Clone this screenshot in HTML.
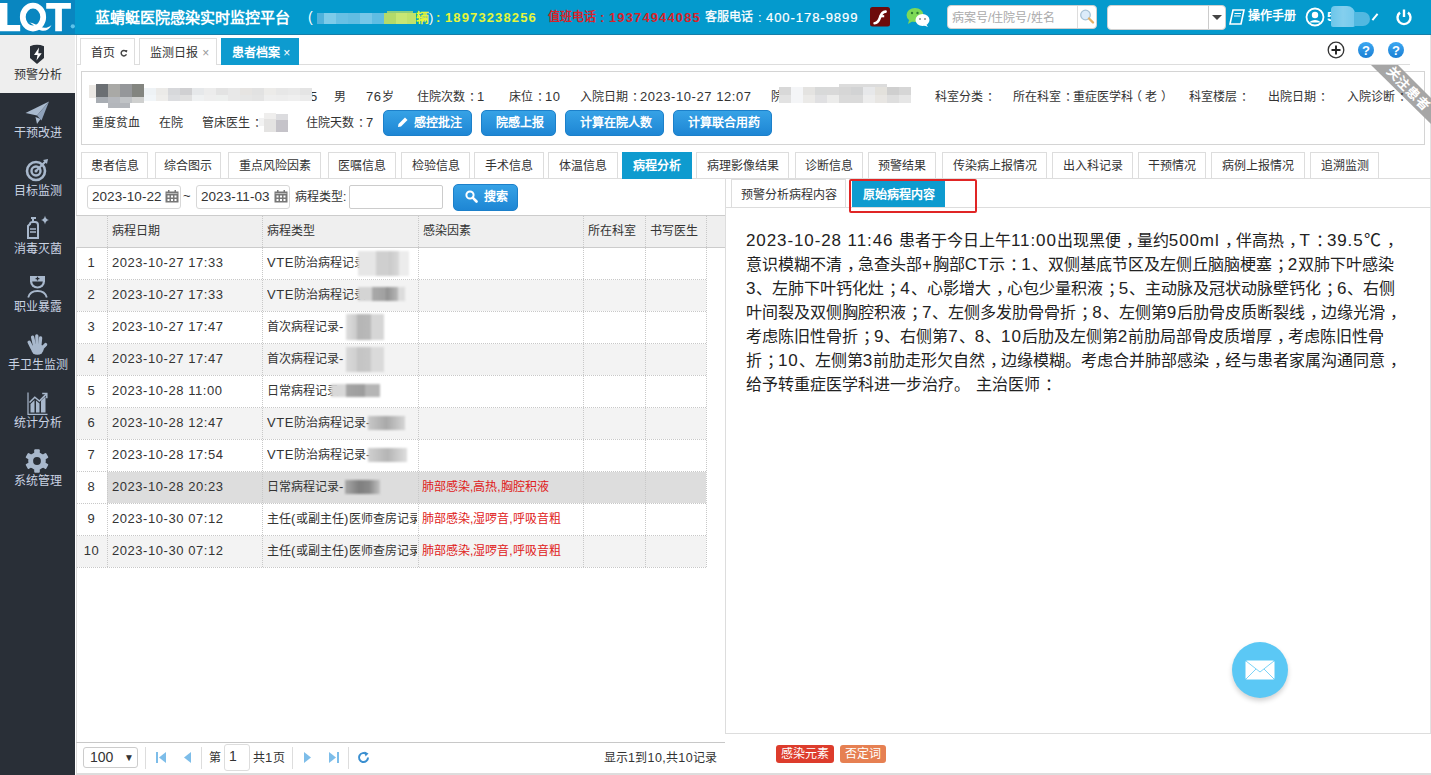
<!DOCTYPE html>
<html lang="zh-CN">
<head>
<meta charset="utf-8">
<style>
*{box-sizing:border-box;margin:0;padding:0}
html,body{width:1431px;height:775px;overflow:hidden;background:#fff;font-family:"Liberation Sans",sans-serif;color:#333;font-size:12px}
.a{position:absolute;white-space:nowrap}
#hdr{position:absolute;left:0;top:0;width:1431px;height:35px;background:#049acd;border-bottom:1px solid #167ea8}
#logo{position:absolute;left:0;top:0;width:75px;height:34px;background:#0986c0;overflow:hidden}
#side{position:absolute;left:0;top:35px;width:75px;height:740px;background:#292f37}
.si{position:absolute;left:0;width:75px;height:58px;text-align:center;color:#c9d3e3;font-size:12px}
.si .t{position:absolute;left:0;width:75px;top:32px;line-height:16px;text-align:center}
.si svg{position:absolute;left:27px;top:6px}
.tab{position:absolute;top:38px;height:27px;border:1px solid #ddd;border-bottom:none;background:#fff;font-size:12px;line-height:28px;color:#333}
.stab{position:absolute;top:152px;height:27px;border:1px solid #ddd;background:#fff;font-size:12px;line-height:27px;color:#333;text-align:center}
.btn{position:absolute;top:110px;height:26px;border-radius:5px;background:linear-gradient(#36a2e6,#1e86d4);color:#fff;font-size:12px;font-weight:bold;line-height:25px;text-align:center;border:1px solid #1c80ca;padding-left:2px}
.cell{position:absolute;height:32px;line-height:32px;font-size:12px;color:#333;white-space:nowrap}
.v12r{font-size:12px}
.v12s{font-size:12.5px;letter-spacing:0.5px}
.ln{position:absolute;left:746px;font-size:16px;color:#222;white-space:nowrap;height:24px;line-height:24px}
.n{letter-spacing:1.4px}
.v16{font-size:17px;letter-spacing:0.9px}
.v12{font-size:13px;letter-spacing:0.55px}
.fp{font-style:normal;position:relative;left:0.32em}
.fpl{font-style:normal;position:relative;left:-0.25em}
.fpr{font-style:normal;position:relative;left:0.3em}
</style>
</head>
<body>
<!-- HEADER -->
<div id="hdr"></div>
<div id="logo"><svg width="75" height="34" viewBox="0 0 75 34" style="position:absolute;left:0;top:0"><path d="M0 3 H7.4 V25 H20.2 V31.3 H0 Z" fill="#fff"/><ellipse cx="33" cy="17.1" rx="10.2" ry="11.4" fill="none" stroke="#fff" stroke-width="5.8"/><path d="M29 22.5 C33 23.5 36 29 41 30.5 C45.5 31.8 49.5 29.5 51.5 25 C48.5 27.8 44.5 28.6 41 27 C37 25.3 33.5 22.6 29 22.5 Z" fill="#fff"/><path d="M46.2 2.9 H70.9 V8.8 H61.9 V31.3 H55.2 V8.8 H46.2 Z" fill="#fff"/><circle cx="72.8" cy="26.3" r="2.1" fill="#5ec3ea"/></svg></div>
<div class="a" style="left:95px;top:8px;font-size:15px;font-weight:bold;color:#fff;line-height:19px">蓝蜻蜓医院感染实时监控平台</div>

<div id="side"></div>

<!-- SIDEBAR ITEMS -->
<div class="si" style="top:35px;height:58px;background:#eeeeee;color:#333">
 <svg width="16" height="21" viewBox="0 0 16 21" style="left:29px;top:9px"><path d="M1 2.2 Q8 -0.6 15 2.2 V14 L8 20 L1 14 Z" fill="#292f37"/><path d="M10 3.5 L5 11 H8.5 L7.5 16.5 L12.7 9.3 H9.3 Z" fill="#fff"/></svg>
 <div class="t">预警分析</div></div>
<div class="si" style="top:93px">
 <svg width="26" height="24" viewBox="0 0 26 24" style="left:25px;top:8px"><path d="M0.5 12 L24 0.5 L12 14.5 Z" fill="#a9bace"/><path d="M12 14.5 L24 0.5 L16.5 19.5 Z" fill="#8fa2ba"/><path d="M10.5 16 L12 23 L15.5 18 Z" fill="#a9bace"/></svg>
 <div class="t">干预改进</div></div>
<div class="si" style="top:151px">
 <svg width="26" height="24" viewBox="0 0 26 24" style="left:25px;top:7px"><circle cx="11" cy="13" r="9" fill="none" stroke="#a8b8cc" stroke-width="2.6"/><circle cx="11" cy="13" r="4.5" fill="none" stroke="#a8b8cc" stroke-width="2.4"/><circle cx="11" cy="13" r="1.5" fill="#a8b8cc"/><path d="M11 13 L21 3" stroke="#a8b8cc" stroke-width="2.2"/><path d="M18 2 L23 1 L22 6 Z" fill="#a8b8cc"/></svg>
 <div class="t">目标监测</div></div>
<div class="si" style="top:209px">
 <svg width="26" height="26" viewBox="0 0 26 26" style="left:25px;top:5px"><path d="M6 4 H11 M8 4 V8" stroke="#a8b8cc" stroke-width="2" fill="none"/><path d="M5 10 C5 8 6 8 8 8 H10 C12 8 13 9 13 11 V24 H3 V12 Z" fill="none" stroke="#a8b8cc" stroke-width="2"/><path d="M5 15 H11 M5 18 H11" stroke="#a8b8cc" stroke-width="1.5"/><path d="M20 1.5 Q20.6 5.2 24 6 Q20.6 6.8 20 10.5 Q19.4 6.8 16 6 Q19.4 5.2 20 1.5 Z" fill="#a8b8cc"/></svg>
 <div class="t">消毒灭菌</div></div>
<div class="si" style="top:267px">
 <svg width="21" height="22" viewBox="0 0 21 22" style="left:27px;top:9px"><path d="M3 0 H18 V5.5 A7.5 7 0 0 1 3 5.5 Z" fill="#a8b8cc"/><path d="M5.2 5.6 H15.8 A5.3 4.8 0 0 1 5.2 5.6 Z" fill="#292f37"/><path d="M10.5 0.8 V4.6 M8.6 2.7 H12.4" stroke="#292f37" stroke-width="1.3"/><path d="M1.2 21.5 C2.5 16.5 6.5 15 10.5 15 C14.5 15 18.5 16.5 19.8 21.5" fill="none" stroke="#a8b8cc" stroke-width="1.8"/></svg>
 <div class="t">职业暴露</div></div>
<div class="si" style="top:325px">
 <svg width="21" height="22" viewBox="0 0 21 22" style="left:27px;top:9px"><g stroke="#a8b8cc" stroke-linecap="round" stroke-width="3.3" fill="none"><path d="M2.2 8.2 L5 14"/><path d="M5.6 3.2 L7.6 12"/><path d="M9.8 1.8 L10.2 12"/><path d="M13.6 3.8 L12.8 12"/><path d="M18.6 10.6 L14.2 15"/></g><ellipse cx="10.4" cy="15.2" rx="6.2" ry="5.6" fill="#a8b8cc"/></svg>
 <div class="t">手卫生监测</div></div>
<div class="si" style="top:383px">
 <svg width="22" height="24" viewBox="0 0 22 24" style="left:27px;top:9px"><path d="M1 0.5 V22.3 H20.5" fill="none" stroke="#a8b8cc" stroke-width="1.2"/><path d="M3.5 20.5 V12 L7.5 8.2 V20.5 Z M9 20.5 V8.6 L12.5 11.6 V20.5 Z M14 20.5 V8.8 L18.5 4.6 V20.5 Z" fill="#a8b8cc"/><path d="M2.5 10.5 L7.8 5.2 L12.4 9 L19 2.4" fill="none" stroke="#a8b8cc" stroke-width="1.5"/><path d="M15.2 1.6 H19.8 V6.2" fill="none" stroke="#a8b8cc" stroke-width="1.5"/></svg>
 <div class="t">统计分析</div></div>
<div class="si" style="top:441px">
 <svg width="24" height="24" viewBox="0 0 24 24" style="left:25px;top:8px"><g fill="#a8b8cc" transform="translate(12 12)"><rect x="-2.8" y="-11.8" width="5.6" height="23.6" rx="1"/><rect x="-2.8" y="-11.8" width="5.6" height="23.6" rx="1" transform="rotate(60)"/><rect x="-2.8" y="-11.8" width="5.6" height="23.6" rx="1" transform="rotate(120)"/><circle r="8.8"/></g><circle cx="12" cy="12" r="3.9" fill="#292f37"/></svg>
 <div class="t">系统管理</div></div>

<!-- TABS -->
<div style="position:absolute;left:76px;top:35px;width:1px;height:740px;background:#dcdcdc"></div>
<div style="position:absolute;left:76px;top:64px;width:1334px;height:1px;background:#ddd"></div>
<div class="tab" style="left:80px;width:55px;padding-left:10px">首页</div><svg class="a" style="left:120px;top:49px" width="8" height="8" viewBox="0 0 10 10"><path d="M7.6 3.2 A3.4 3.4 0 1 0 8 6.6" fill="none" stroke="#444" stroke-width="1.8"/><path d="M5.8 1.6 L9.2 1.2 L8.6 4.6 Z" fill="#444"/></svg>
<div class="tab" style="left:139px;width:78px;padding-left:10px">监测日报 <span style="color:#999;position:relative;left:1px">×</span></div>
<div class="tab" style="left:221px;width:78px;padding-left:10px;background:#0e9bcf;border-color:#0e9bcf;color:#fff;font-weight:bold">患者档案 <span style="font-weight:normal">×</span></div>

<!-- HEADER RIGHT -->
<div class="a" style="left:308px;top:9px;font-size:14px;color:#fff;line-height:17px">(</div>
<div class="a" style="left:317px;top:13px;width:67px;height:11px;background:linear-gradient(90deg,#4fb2dc 0,#4fb2dc 10%,#7dcbe9 10%,#7dcbe9 28%,#68c0e4 28%,#68c0e4 46%,#62bde2 46%,#62bde2 64%,#76c7e8 64%,#76c7e8 82%,#5fbde3 82%)"></div>
<div class="a" style="left:384px;top:13px;width:32px;height:11px;background:linear-gradient(90deg,#b4da6a 0,#b4da6a 36%,#c8e674 36%,#c8e674 72%,#c0e26c 72%)"></div>
<div class="a" style="left:387px;top:11px;width:26px;height:2px;background:#c9e45a;opacity:.7"></div>
<div class="a" style="left:416px;top:9px;font-size:13px;font-weight:bold;color:#e6f53a;line-height:17px">辆</div>
<div class="a" style="left:429px;top:9px;font-size:13px;color:#fff;line-height:17px">)</div>
<div class="a" style="left:436px;top:9px;font-size:13px;font-weight:bold;color:#e6f53a;line-height:17px">:</div>
<div class="a" style="left:445px;top:9px;font-size:13px;font-weight:bold;color:#e6f53a;line-height:17px;letter-spacing:1.12px">18973238256</div>
<div class="a" style="left:548px;top:9px;font-size:12px;font-weight:bold;color:#d8232a;line-height:17px">值班电话</div>
<div class="a" style="left:600px;top:9px;font-size:13px;font-weight:bold;color:#d8232a;line-height:17px">:</div>
<div class="a" style="left:609px;top:9px;font-size:13px;font-weight:bold;color:#d8232a;line-height:17px;letter-spacing:1.12px">19374944085</div>
<div class="a" style="left:705px;top:9px;font-size:12px;color:#fff;line-height:17px;-webkit-text-stroke:0.3px #fff">客服电话</div>
<div class="a" style="left:758px;top:9px;font-size:13px;color:#fff;line-height:17px">:</div>
<div class="a" style="left:766px;top:9px;font-size:13px;color:#fff;line-height:17px;letter-spacing:0.95px;-webkit-text-stroke:0.2px #fff">400-178-9899</div>
<svg class="a" style="left:870px;top:7px" width="20" height="20" viewBox="0 0 20 20"><rect x="0" y="0" width="20" height="19.5" rx="2.5" fill="#6d0b0b"/><path d="M4.6 16.2 C8.2 16.2 9.2 13 10.2 10 C11.2 6.6 12.4 4.8 15.6 4.6" fill="none" stroke="#fff" stroke-width="2.6" stroke-linecap="round"/><path d="M9.6 9.2 H14.2" stroke="#fff" stroke-width="2.2"/></svg>
<svg class="a" style="left:905px;top:6px" width="26" height="22" viewBox="0 0 26 22"><ellipse cx="10" cy="9" rx="8.5" ry="7" fill="#7ed957"/><path d="M4 14 L3 18 L8 15 Z" fill="#7ed957"/><circle cx="7" cy="7" r="1.2" fill="#2e7d32"/><circle cx="12.5" cy="7" r="1.2" fill="#2e7d32"/><ellipse cx="17.5" cy="14" rx="7" ry="6" fill="#fff"/><path d="M21 18 L23 21 L18 19 Z" fill="#fff"/><circle cx="15" cy="13" r="1" fill="#888"/><circle cx="20" cy="13" r="1" fill="#888"/></svg>
<div class="a" style="left:947px;top:5px;width:150px;height:24px;background:#fff;border-radius:4px;border:1px solid #d0d0d0"></div>
<div class="a" style="left:952px;top:9px;font-size:12px;color:#aaa;line-height:18px">病案号/住院号/姓名</div>
<div class="a" style="left:1077px;top:6px;width:1px;height:22px;background:#ddd"></div>
<svg class="a" style="left:1078px;top:8px" width="18" height="18" viewBox="0 0 18 18"><circle cx="7.5" cy="7" r="4.8" fill="#dcecfa" stroke="#a9c3d6" stroke-width="1.3"/><path d="M11 10.5 L15 14.5" stroke="#e3b066" stroke-width="2.4" stroke-linecap="round"/></svg>
<div class="a" style="left:1107px;top:5px;width:119px;height:25px;background:#fff;border-radius:4px;border:1px solid #d0d0d0"></div>
<div class="a" style="left:1208px;top:6px;width:1px;height:23px;background:#ccc"></div>
<div class="a" style="left:1212px;top:15px;width:0;height:0;border-left:5px solid transparent;border-right:5px solid transparent;border-top:5px solid #444"></div>
<svg class="a" style="left:1229px;top:9px" width="16" height="16" viewBox="0 0 16 16"><path d="M4 1 H15 L12 15 H1 Z" fill="none" stroke="#fff" stroke-width="1.6"/><path d="M5.5 4.5 H12 M5 7 H11.5" stroke="#fff" stroke-width="1.2"/></svg>
<div class="a" style="left:1248px;top:8px;font-size:12px;font-weight:bold;color:#fff;line-height:17px">操作手册</div>
<svg class="a" style="left:1305px;top:7px" width="20" height="20" viewBox="0 0 20 20"><circle cx="10" cy="10" r="8.5" fill="none" stroke="#fff" stroke-width="1.8"/><circle cx="10" cy="8" r="3.2" fill="#fff"/><path d="M4.5 15.5 C6 12 14 12 15.5 15.5" fill="#fff"/></svg>
<div class="a" style="left:1327px;top:8px;font-size:13px;color:#fff;line-height:18px;font-weight:bold">5</div>
<div class="a" style="left:1331px;top:6px;width:24px;height:21px;background:linear-gradient(90deg,#6cc6ea,#84cfee 50%,#74c9ec);border-radius:4px 8px 2px 2px;filter:blur(0.6px)"></div><div class="a" style="left:1354px;top:12px;width:16px;height:14px;background:#52b8e0;border-radius:0 7px 7px 0;filter:blur(0.6px)"></div>
<div class="a" style="left:1374px;top:13px;width:2px;height:8px;background:#fff;transform:rotate(40deg)"></div>
<svg class="a" style="left:1395px;top:8px" width="18" height="18" viewBox="0 0 18 18"><path d="M5 4.5 A6.5 6.5 0 1 0 13 4.5" fill="none" stroke="#fff" stroke-width="2.4"/><path d="M9 1.5 V9" stroke="#fff" stroke-width="2.4"/></svg>

<!-- TAB RIGHT ICONS -->
<svg class="a" style="left:1320px;top:38px" width="90" height="26" viewBox="1320 38 90 26"><defs><linearGradient id="qg" x1="0" y1="0" x2="0" y2="1"><stop offset="0" stop-color="#3ba8f2"/><stop offset="1" stop-color="#1b7ed3"/></linearGradient></defs>
<circle cx="1336" cy="50" r="7.8" fill="none" stroke="#333" stroke-width="1.3"/><path d="M1336 45.5 V54.5 M1331.5 50 H1340.5" stroke="#222" stroke-width="1.9"/>
<circle cx="1366" cy="50" r="8" fill="url(#qg)"/><text x="1366" y="54.8" text-anchor="middle" font-size="13" font-weight="bold" fill="#fff" font-family="Liberation Sans">?</text>
<circle cx="1396" cy="50" r="8" fill="url(#qg)"/><text x="1396" y="54.8" text-anchor="middle" font-size="13" font-weight="bold" fill="#fff" font-family="Liberation Sans">?</text>
</svg>
<div class="a" style="left:1430px;top:35px;width:1px;height:699px;background:#e2e2e2"></div>

<!-- PATIENT INFO BOX -->
<div class="a" style="left:81px;top:71px;width:1344px;height:74px;border:1px solid #d4d4d4;overflow:hidden">
</div>
<svg class="a" style="left:1360px;top:60px" width="71" height="70" viewBox="1360 60 71 70"><polygon points="1371,65 1398,65 1431,98 1431,124" fill="#a6a6a6"/><text x="1408.5" y="93.5" text-anchor="middle" font-size="13" font-weight="bold" fill="#fff" transform="rotate(45 1408.5 89)" letter-spacing="1">关注患者</text></svg>


<div class="a" style="left:310px;top:89px;font-size:12px;line-height:16px"><span class="v12">5</span></div>
<div class="a" style="left:89px;top:85px;width:8px;height:13px;background:#ebe8e4"></div>
<div class="a" style="left:96px;top:84px;width:12px;height:13px;background:#6b6f73"></div>
<div class="a" style="left:108px;top:84px;width:12px;height:13px;background:#a9a9a6"></div>
<div class="a" style="left:120px;top:84px;width:12px;height:13px;background:#95979a"></div>
<div class="a" style="left:132px;top:84px;width:12px;height:13px;background:#838580"></div>
<div class="a" style="left:96px;top:97px;width:12px;height:6px;background:#a8adb3"></div>
<div class="a" style="left:108px;top:97px;width:12px;height:6px;background:#b5b8bd"></div>
<div class="a" style="left:120px;top:97px;width:12px;height:6px;background:#c0c3c6"></div>
<div class="a" style="left:132px;top:97px;width:12px;height:6px;background:#cfd0cf"></div>
<div class="a" style="left:108px;top:103px;width:22px;height:5px;background:#b3b6bb"></div>
<div class="a" style="left:144px;top:88px;width:12px;height:7px;background:#eef2f5"></div>
<div class="a" style="left:156px;top:88px;width:12px;height:7px;background:#ebeae8"></div>
<div class="a" style="left:168px;top:88px;width:12px;height:7px;background:#d7d8db"></div>
<div class="a" style="left:180px;top:88px;width:12px;height:7px;background:#d0d0d2"></div>
<div class="a" style="left:192px;top:88px;width:12px;height:7px;background:#e6e8ea"></div>
<div class="a" style="left:204px;top:88px;width:12px;height:7px;background:#ececec"></div>
<div class="a" style="left:216px;top:88px;width:12px;height:7px;background:#e3e3e3"></div>
<div class="a" style="left:228px;top:88px;width:12px;height:7px;background:#e8e8e8"></div>
<div class="a" style="left:240px;top:88px;width:12px;height:7px;background:#e6e4e2"></div>
<div class="a" style="left:252px;top:88px;width:12px;height:7px;background:#e2e2e2"></div>
<div class="a" style="left:264px;top:88px;width:12px;height:7px;background:#ecebe9"></div>
<div class="a" style="left:276px;top:88px;width:12px;height:7px;background:#e7e7e7"></div>
<div class="a" style="left:288px;top:88px;width:12px;height:7px;background:#e9e9e9"></div>
<div class="a" style="left:300px;top:88px;width:12px;height:7px;background:#e4e4e4"></div>
<div class="a" style="left:144px;top:95px;width:12px;height:6px;background:#f1f5f8"></div>
<div class="a" style="left:156px;top:95px;width:12px;height:6px;background:#eeedeb"></div>
<div class="a" style="left:168px;top:95px;width:12px;height:6px;background:#dcdde0"></div>
<div class="a" style="left:180px;top:95px;width:12px;height:6px;background:#e0e0e0"></div>
<div class="a" style="left:192px;top:95px;width:12px;height:6px;background:#eff1f2"></div>
<div class="a" style="left:204px;top:95px;width:12px;height:6px;background:#eeeeee"></div>
<div class="a" style="left:216px;top:95px;width:12px;height:6px;background:#edefee"></div>
<div class="a" style="left:228px;top:95px;width:12px;height:6px;background:#e8e8e8"></div>
<div class="a" style="left:240px;top:95px;width:12px;height:6px;background:#e6e6e6"></div>
<div class="a" style="left:252px;top:95px;width:12px;height:6px;background:#e4e4e4"></div>
<div class="a" style="left:264px;top:95px;width:12px;height:6px;background:#eeeeee"></div>
<div class="a" style="left:276px;top:95px;width:12px;height:6px;background:#ededed"></div>
<div class="a" style="left:288px;top:95px;width:12px;height:6px;background:#efefef"></div>
<div class="a" style="left:300px;top:95px;width:12px;height:6px;background:#ebebeb"></div>
<div class="a" style="left:334px;top:89px;font-size:12px;line-height:16px">男</div>
<div class="a" style="left:366px;top:89px;font-size:12px;line-height:16px"><span class="v12">76</span>岁</div>
<div class="a" style="left:417px;top:89px;font-size:12px;line-height:16px">住院次数<i class="fp">：</i><span class="v12">1</span></div>
<div class="a" style="left:509px;top:89px;font-size:12px;line-height:16px">床位<i class="fp">：</i><span class="v12">10</span></div>
<div class="a" style="left:580px;top:89px;font-size:12px;line-height:16px">入院日期<i class="fp">：</i><span class="v12">2023-10-27 12:07</span></div>
<div class="a" style="left:771px;top:89px;font-size:12px;line-height:16px">院</div>
<div class="a" style="left:779px;top:87px;width:12px;height:8px;background:#d8d8d8"></div>
<div class="a" style="left:791px;top:87px;width:12px;height:8px;background:#f4f5f7"></div>
<div class="a" style="left:803px;top:87px;width:12px;height:8px;background:#e4e3e1"></div>
<div class="a" style="left:815px;top:87px;width:12px;height:8px;background:#d8d9d9"></div>
<div class="a" style="left:827px;top:87px;width:12px;height:8px;background:#d9d9d9"></div>
<div class="a" style="left:839px;top:87px;width:12px;height:8px;background:#d6d6d6"></div>
<div class="a" style="left:851px;top:87px;width:12px;height:8px;background:#d2d3d4"></div>
<div class="a" style="left:863px;top:87px;width:12px;height:8px;background:#e7e8ea"></div>
<div class="a" style="left:875px;top:87px;width:12px;height:8px;background:#e3e1dc"></div>
<div class="a" style="left:887px;top:87px;width:12px;height:8px;background:#cfcfcf"></div>
<div class="a" style="left:899px;top:87px;width:12px;height:8px;background:#d6d6d6"></div>
<div class="a" style="left:779px;top:95px;width:12px;height:8px;background:#e2e2e2"></div>
<div class="a" style="left:791px;top:95px;width:12px;height:8px;background:#f4f5f7"></div>
<div class="a" style="left:803px;top:95px;width:12px;height:8px;background:#ebeae8"></div>
<div class="a" style="left:815px;top:95px;width:12px;height:8px;background:#e0e0e2"></div>
<div class="a" style="left:827px;top:95px;width:12px;height:8px;background:#ececeb"></div>
<div class="a" style="left:839px;top:95px;width:12px;height:8px;background:#dadada"></div>
<div class="a" style="left:851px;top:95px;width:12px;height:8px;background:#dadada"></div>
<div class="a" style="left:863px;top:95px;width:12px;height:8px;background:#ededed"></div>
<div class="a" style="left:875px;top:95px;width:12px;height:8px;background:#e8e6e3"></div>
<div class="a" style="left:887px;top:95px;width:12px;height:8px;background:#dedede"></div>
<div class="a" style="left:899px;top:95px;width:12px;height:8px;background:#e6e6e6"></div>
<div class="a" style="left:839px;top:84px;width:48px;height:3px;background:#dcdcdc"></div>
<div class="a" style="left:935px;top:89px;font-size:12px;line-height:16px">科室分类<i class="fp">：</i></div>
<div class="a" style="left:1013px;top:89px;font-size:12px;line-height:16px">所在科室<i class="fp">：</i>重症医学科<i class="fpl">（</i>老<i class="fpr">）</i></div>
<div class="a" style="left:1189px;top:89px;font-size:12px;line-height:16px">科室楼层<i class="fp">：</i></div>
<div class="a" style="left:1268px;top:89px;font-size:12px;line-height:16px">出院日期<i class="fp">：</i></div>
<div class="a" style="left:1347px;top:89px;font-size:12px;line-height:16px">入院诊断<i class="fp">：</i></div>

<div class="a" style="left:92px;top:115px;font-size:12px;line-height:16px">重度贫血</div>
<div class="a" style="left:159px;top:115px;font-size:12px;line-height:16px">在院</div>
<div class="a" style="left:202px;top:115px;font-size:12px;line-height:16px">管床医生<i class="fp">：</i></div>
<div class="a" style="left:259px;top:118px;width:5px;height:8px;background:#f2f2f2"></div>
<div class="a" style="left:264px;top:113px;width:12px;height:6px;background:#efeeed"></div>
<div class="a" style="left:264px;top:119px;width:12px;height:13px;background:#e4e3e2"></div>
<div class="a" style="left:276px;top:114px;width:12px;height:6px;background:#dcdcdf"></div>
<div class="a" style="left:276px;top:120px;width:12px;height:12px;background:#c5c3c9"></div>
<div class="a" style="left:306px;top:115px;font-size:12px;line-height:16px">住院天数<i class="fp">：</i><span class="v12">7</span></div>

<div class="btn" style="left:383px;width:89px"><svg width="13" height="13" viewBox="0 0 13 13" style="vertical-align:-2px;margin-right:5px"><path d="M2 11 L2.5 8 L9 1.5 L11.5 4 L5 10.5 Z" fill="#fff"/></svg>感控批注</div>
<div class="btn" style="left:481px;width:75px">院感上报</div>
<div class="btn" style="left:565px;width:99px">计算在院人数</div>
<div class="btn" style="left:673px;width:99px">计算联合用药</div>

<!-- SUB TABS -->
<div class="a" style="left:76px;top:178px;width:1355px;height:1px;background:#ddd"></div>
<div class="stab" style="left:81px;width:67px">患者信息</div>
<div class="stab" style="left:155px;width:66px">综合图示</div>
<div class="stab" style="left:228px;width:93px">重点风险因素</div>
<div class="stab" style="left:328px;width:68px">医嘱信息</div>
<div class="stab" style="left:401px;width:69px">检验信息</div>
<div class="stab" style="left:474px;width:70px">手术信息</div>
<div class="stab" style="left:548px;width:70px">体温信息</div>
<div class="stab" style="left:622px;width:70px;background:#0e9bcf;border-color:#0e9bcf;color:#fff;font-weight:bold">病程分析</div>
<div class="stab" style="left:696px;width:93px">病理影像结果</div>
<div class="stab" style="left:795px;width:68px">诊断信息</div>
<div class="stab" style="left:868px;width:68px">预警结果</div>
<div class="stab" style="left:942px;width:105px">传染病上报情况</div>
<div class="stab" style="left:1052px;width:81px">出入科记录</div>
<div class="stab" style="left:1138px;width:68px">干预情况</div>
<div class="stab" style="left:1211px;width:94px">病例上报情况</div>
<div class="stab" style="left:1310px;width:69px">追溯监测</div>

<!-- LEFT PANEL FILTERS -->
<div class="a" style="left:87px;top:185px;width:94px;height:24px;border:1px solid #d8d8d8;border-radius:3px"></div>
<div class="a" style="left:92px;top:188px;font-size:13.5px;line-height:17px;letter-spacing:0.05px;color:#333">2023-10-22</div>
<svg class="a" style="left:165px;top:190px" width="14" height="13" viewBox="0 0 14 13"><rect x="0.5" y="1.5" width="13" height="11" fill="#777"/><rect x="3" y="0" width="1.5" height="3" fill="#777"/><rect x="9.5" y="0" width="1.5" height="3" fill="#777"/><g fill="#fff"><rect x="2.5" y="5.5" width="2" height="2"/><rect x="6" y="5.5" width="2" height="2"/><rect x="9.5" y="5.5" width="2" height="2"/><rect x="2.5" y="9" width="2" height="2"/><rect x="6" y="9" width="2" height="2"/><rect x="9.5" y="9" width="2" height="2"/></g><rect x="1.5" y="3" width="11" height="1" fill="#fff" opacity=".5"/></svg>
<div class="a" style="left:183px;top:187px;font-size:13px;line-height:18px">~</div>
<div class="a" style="left:196px;top:185px;width:94px;height:24px;border:1px solid #d8d8d8;border-radius:3px"></div>
<div class="a" style="left:201px;top:188px;font-size:13.5px;line-height:17px;letter-spacing:0.05px;color:#333">2023-11-03</div>
<svg class="a" style="left:274px;top:190px" width="14" height="13" viewBox="0 0 14 13"><rect x="0.5" y="1.5" width="13" height="11" fill="#777"/><rect x="3" y="0" width="1.5" height="3" fill="#777"/><rect x="9.5" y="0" width="1.5" height="3" fill="#777"/><g fill="#fff"><rect x="2.5" y="5.5" width="2" height="2"/><rect x="6" y="5.5" width="2" height="2"/><rect x="9.5" y="5.5" width="2" height="2"/><rect x="2.5" y="9" width="2" height="2"/><rect x="6" y="9" width="2" height="2"/><rect x="9.5" y="9" width="2" height="2"/></g><rect x="1.5" y="3" width="11" height="1" fill="#fff" opacity=".5"/></svg>
<div class="a" style="left:295px;top:189px;font-size:12px;line-height:16px">病程类型:</div>
<div class="a" style="left:349px;top:185px;width:94px;height:24px;border:1px solid #ccc;border-radius:2px"></div>
<div class="btn" style="left:453px;top:184px;width:65px;height:27px;line-height:25px"><svg width="13" height="13" viewBox="0 0 13 13" style="vertical-align:-2px;margin-right:6px"><circle cx="5" cy="5" r="3.6" fill="none" stroke="#fff" stroke-width="2"/><path d="M7.7 7.7 L11.5 11.5" stroke="#fff" stroke-width="2.6" stroke-linecap="round"/></svg>搜索</div>

<!-- LEFT PANEL TABLE -->
<div class="a" style="left:76px;top:215px;width:649px;height:33px;background:#efefef;border-top:1px solid #ccc;border-bottom:1px solid #ccc"></div>
<!-- TABLE START -->
<div class="cell" style="left:112px;top:215px">病程日期</div>
<div class="cell" style="left:267px;top:215px">病程类型</div>
<div class="cell" style="left:423px;top:215px">感染因素</div>
<div class="cell" style="left:588px;top:215px">所在科室</div>
<div class="cell" style="left:650px;top:215px">书写医生</div>
<div class="a" style="left:77px;top:248px;width:629px;height:31px;background:#fff"></div>
<div class="cell" style="left:76px;width:31px;text-align:center;top:247px"><span class="v12">1</span></div>
<div class="cell" style="left:112px;top:247px"><span class="v12">2023-10-27 17:33</span></div>
<div class="cell" style="left:267px;top:247px;width:150px;overflow:hidden"><span class="v12">VTE</span>防治病程记录<span class="v12">-</span></div>
<div class="a" style="left:358px;top:251px;width:51px;height:25px;background:linear-gradient(90deg,#e6e6e6 0,#e6e6e6 35%,#cfcfcf 35%,#cfcfcf 60%,#c9c9c9 60%,#d8d8d8 80%,#ececec 80%);filter:blur(1px)"></div>
<div class="a" style="left:77px;top:280px;width:629px;height:31px;background:#f3f3f3"></div>
<div class="cell" style="left:76px;width:31px;text-align:center;top:279px"><span class="v12">2</span></div>
<div class="cell" style="left:112px;top:279px"><span class="v12">2023-10-27 17:33</span></div>
<div class="cell" style="left:267px;top:279px;width:150px;overflow:hidden"><span class="v12">VTE</span>防治病程记录<span class="v12">-</span></div>
<div class="a" style="left:358px;top:287px;width:47px;height:14px;background:linear-gradient(90deg,#d4d4d4 0,#d4d4d4 30%,#a9a9a9 30%,#a0a0a0 60%,#8f8f8f 60%,#b8b8b8 85%,#dcdcdc 85%);filter:blur(1px)"></div>
<div class="a" style="left:77px;top:312px;width:629px;height:31px;background:#fff"></div>
<div class="cell" style="left:76px;width:31px;text-align:center;top:311px"><span class="v12">3</span></div>
<div class="cell" style="left:112px;top:311px"><span class="v12">2023-10-27 17:47</span></div>
<div class="cell" style="left:267px;top:311px;width:150px;overflow:hidden">首次病程记录<span class="v12">-</span></div>
<div class="a" style="left:346px;top:314px;width:38px;height:26px;background:linear-gradient(90deg,#dedede 0,#c9c9c9 30%,#b5b5b5 30%,#b9b9b9 65%,#d6d6d6 65%);filter:blur(1px)"></div>
<div class="a" style="left:77px;top:344px;width:629px;height:31px;background:#f3f3f3"></div>
<div class="cell" style="left:76px;width:31px;text-align:center;top:343px"><span class="v12">4</span></div>
<div class="cell" style="left:112px;top:343px"><span class="v12">2023-10-27 17:47</span></div>
<div class="cell" style="left:267px;top:343px;width:150px;overflow:hidden">首次病程记录<span class="v12">-</span></div>
<div class="a" style="left:346px;top:347px;width:38px;height:25px;background:linear-gradient(90deg,#d9d9d9 0,#cfcfcf 30%,#c4c4c4 30%,#c8c8c8 65%,#dadada 65%);filter:blur(1px)"></div>
<div class="a" style="left:77px;top:376px;width:629px;height:31px;background:#fff"></div>
<div class="cell" style="left:76px;width:31px;text-align:center;top:375px"><span class="v12">5</span></div>
<div class="cell" style="left:112px;top:375px"><span class="v12">2023-10-28 11:00</span></div>
<div class="cell" style="left:267px;top:375px;width:150px;overflow:hidden">日常病程记录<span class="v12">-</span></div>
<div class="a" style="left:331px;top:384px;width:49px;height:13px;background:linear-gradient(90deg,#d8d8d8 0,#d8d8d8 30%,#a5a5a5 30%,#9c9c9c 70%,#b5b5b5 70%);filter:blur(1px)"></div>
<div class="a" style="left:77px;top:408px;width:629px;height:31px;background:#f3f3f3"></div>
<div class="cell" style="left:76px;width:31px;text-align:center;top:407px"><span class="v12">6</span></div>
<div class="cell" style="left:112px;top:407px"><span class="v12">2023-10-28 12:47</span></div>
<div class="cell" style="left:267px;top:407px;width:150px;overflow:hidden"><span class="v12">VTE</span>防治病程记录<span class="v12">-</span></div>
<div class="a" style="left:368px;top:416px;width:37px;height:14px;background:linear-gradient(90deg,#c8c8c8,#a9a9a9 50%,#d5d5d5);filter:blur(1px)"></div>
<div class="a" style="left:77px;top:440px;width:629px;height:31px;background:#fff"></div>
<div class="cell" style="left:76px;width:31px;text-align:center;top:439px"><span class="v12">7</span></div>
<div class="cell" style="left:112px;top:439px"><span class="v12">2023-10-28 17:54</span></div>
<div class="cell" style="left:267px;top:439px;width:150px;overflow:hidden"><span class="v12">VTE</span>防治病程记录<span class="v12">-</span></div>
<div class="a" style="left:368px;top:448px;width:39px;height:14px;background:linear-gradient(90deg,#d0d0d0,#b5b5b5 50%,#dedede);filter:blur(1px)"></div>
<div class="a" style="left:77px;top:472px;width:629px;height:31px;background:#dddddd"></div>
<div class="a" style="left:77px;top:472px;width:30px;height:31px;background:#fff"></div>
<div class="cell" style="left:76px;width:31px;text-align:center;top:471px"><span class="v12">8</span></div>
<div class="cell" style="left:112px;top:471px"><span class="v12">2023-10-28 20:23</span></div>
<div class="cell" style="left:267px;top:471px;width:150px;overflow:hidden">日常病程记录<span class="v12">-</span></div>
<div class="a" style="left:345px;top:480px;width:35px;height:14px;background:linear-gradient(90deg,#a8a8a8,#7f7f7f 40%,#8a8a8a 70%,#c2c2c2);filter:blur(1px)"></div>
<div class="cell" style="left:422px;top:471px;color:#e02020">肺部感染<span class="v12r">,</span>高热<span class="v12r">,</span>胸腔积液</div>
<div class="a" style="left:77px;top:504px;width:629px;height:31px;background:#fff"></div>
<div class="cell" style="left:76px;width:31px;text-align:center;top:503px"><span class="v12">9</span></div>
<div class="cell" style="left:112px;top:503px"><span class="v12">2023-10-30 07:12</span></div>
<div class="cell" style="left:267px;top:503px;width:150px;overflow:hidden">主任<span class="v12">(</span>或副主任<span class="v12">)</span>医师查房记录</div>
<div class="cell" style="left:422px;top:503px;color:#e02020">肺部感染<span class="v12r">,</span>湿啰音<span class="v12r">,</span>呼吸音粗</div>
<div class="a" style="left:77px;top:536px;width:629px;height:31px;background:#f3f3f3"></div>
<div class="cell" style="left:76px;width:31px;text-align:center;top:535px"><span class="v12">10</span></div>
<div class="cell" style="left:112px;top:535px"><span class="v12">2023-10-30 07:12</span></div>
<div class="cell" style="left:267px;top:535px;width:150px;overflow:hidden">主任<span class="v12">(</span>或副主任<span class="v12">)</span>医师查房记录</div>
<div class="cell" style="left:422px;top:535px;color:#e02020">肺部感染<span class="v12r">,</span>湿啰音<span class="v12r">,</span>呼吸音粗</div>
<div class="a" style="left:77px;top:279px;width:629px;height:0;border-top:1px dotted #c8c8c8"></div>
<div class="a" style="left:77px;top:311px;width:629px;height:0;border-top:1px dotted #c8c8c8"></div>
<div class="a" style="left:77px;top:343px;width:629px;height:0;border-top:1px dotted #c8c8c8"></div>
<div class="a" style="left:77px;top:375px;width:629px;height:0;border-top:1px dotted #c8c8c8"></div>
<div class="a" style="left:77px;top:407px;width:629px;height:0;border-top:1px dotted #c8c8c8"></div>
<div class="a" style="left:77px;top:439px;width:629px;height:0;border-top:1px dotted #c8c8c8"></div>
<div class="a" style="left:77px;top:471px;width:629px;height:0;border-top:1px dotted #c8c8c8"></div>
<div class="a" style="left:77px;top:503px;width:629px;height:0;border-top:1px dotted #c8c8c8"></div>
<div class="a" style="left:77px;top:535px;width:629px;height:0;border-top:1px dotted #c8c8c8"></div>
<div class="a" style="left:77px;top:567px;width:629px;height:0;border-top:1px dotted #c8c8c8"></div>
<div class="a" style="left:107px;top:216px;width:0;height:351px;border-left:1px dotted #c8c8c8"></div>
<div class="a" style="left:262px;top:216px;width:0;height:351px;border-left:1px dotted #c8c8c8"></div>
<div class="a" style="left:418px;top:216px;width:0;height:351px;border-left:1px dotted #c8c8c8"></div>
<div class="a" style="left:583px;top:216px;width:0;height:351px;border-left:1px dotted #c8c8c8"></div>
<div class="a" style="left:645px;top:216px;width:0;height:351px;border-left:1px dotted #c8c8c8"></div>
<div class="a" style="left:706px;top:216px;width:0;height:351px;border-left:1px dotted #c8c8c8"></div>
<!-- PANEL BORDERS -->
<div class="a" style="left:725px;top:178px;width:1px;height:556px;background:#ddd"></div>
<div class="a" style="left:76px;top:742px;width:649px;height:1px;background:#c8c8c8"></div>
<div class="a" style="left:76px;top:773px;width:1355px;height:2px;background:#ddd"></div>

<!-- RIGHT PANEL -->
<div class="a" style="left:726px;top:207px;width:705px;height:1px;background:#ddd"></div>
<div class="stab" style="left:731px;top:179px;width:115px;height:29px;line-height:30px">预警分析病程内容</div>
<div class="stab" style="left:852px;top:180px;width:93px;height:27px;line-height:29px;background:#0e9bcf;border-color:#0e9bcf;color:#fff;font-weight:bold">原始病程内容</div>
<div class="a" style="left:849px;top:179px;width:128px;height:34px;border:2px solid #e02525;border-radius:2px"></div>

<div class="ln" style="top:229px"><span class="v16">2023-10-28 11:46 </span>患者于今日上午<span class="v16">11:00</span>出现黑便<i class="fp">，</i>量约<span class="v16">500ml</span><i class="fp">，</i>伴高热<i class="fp">，</i><span class="v16">T</span><i class="fp">：</i><span class="v16">39.5℃</span><i class="fp">，</i></div>
<div class="ln" style="top:253px">意识模糊不清<i class="fp">，</i>急查头部<span class="v16">+</span>胸部<span class="v16">CT</span>示<i class="fp">：</i><span class="v16">1</span>、双侧基底节区及左侧丘脑脑梗塞<i class="fp">；</i><span class="v16">2</span>双肺下叶感染</div>
<div class="ln" style="top:277px"><span class="v16">3</span>、左肺下叶钙化灶<i class="fp">；</i><span class="v16">4</span>、心影增大<i class="fp">，</i>心包少量积液<i class="fp">；</i><span class="v16">5</span>、主动脉及冠状动脉壁钙化<i class="fp">；</i><span class="v16">6</span>、右侧</div>
<div class="ln" style="top:301px">叶间裂及双侧胸腔积液<i class="fp">；</i><span class="v16">7</span>、左侧多发肋骨骨折<i class="fp">；</i><span class="v16">8</span>、左侧第<span class="v16">9</span>后肋骨皮质断裂线<i class="fp">，</i>边缘光滑<i class="fp">，</i></div>
<div class="ln" style="top:325px">考虑陈旧性骨折<i class="fp">；</i><span class="v16">9</span>、右侧第<span class="v16">7</span>、<span class="v16">8</span>、<span class="v16">10</span>后肋及左侧第<span class="v16">2</span>前肋局部骨皮质增厚<i class="fp">，</i>考虑陈旧性骨</div>
<div class="ln" style="top:349px">折<i class="fp">；</i><span class="v16">10</span>、左侧第<span class="v16">3</span>前肋走形欠自然<i class="fp">，</i>边缘模糊。考虑合并肺部感染<i class="fp">，</i>经与患者家属沟通同意<i class="fp">，</i></div>
<div class="ln" style="top:373px">给予转重症医学科进一步治疗。<span class="v16"> </span>主治医师<i class="fp">：</i></div>
<div class="a" style="left:725px;top:733px;width:706px;height:1px;background:#ddd"></div>
<div class="a" style="left:776px;top:745px;width:58px;height:18px;background:#dd3c2c;color:#fff;font-size:12px;line-height:18px;text-align:center;border-radius:3px">感染元素</div>
<div class="a" style="left:840px;top:745px;width:46px;height:18px;background:#e68052;color:#fff;font-size:12px;line-height:18px;text-align:center;border-radius:3px">否定词</div>

<div class="a" style="left:1232px;top:642px;width:56px;height:56px;border-radius:50%;background:#5bc8f5;box-shadow:0 3px 5px rgba(0,0,0,.18)"></div>
<svg class="a" style="left:1245px;top:660px" width="30" height="20" viewBox="0 0 30 20"><rect x="0.5" y="0.5" width="29" height="19" rx="1.5" fill="#fff"/><path d="M1 1 L15 12 L29 1 M1 19 L11 9 M29 19 L19 9" fill="none" stroke="#5bc8f5" stroke-width="0.8"/></svg>

<!-- PAGER -->
<div class="a" style="left:83px;top:747px;width:55px;height:21px;border:1px solid #ccc;border-radius:3px;font-size:14px;line-height:19px;padding-left:6px">100<span style="position:absolute;left:40px;top:0;font-size:10px">▼</span></div>
<div class="a" style="left:145px;top:747px;width:1px;height:22px;background:#ddd"></div>
<svg class="a" style="left:155px;top:751px" width="12" height="13" viewBox="0 0 12 13"><rect x="1" y="1" width="2" height="11" fill="#7dbde9"/><path d="M11 1 L4 6.5 L11 12 Z" fill="#7dbde9"/></svg>
<svg class="a" style="left:182px;top:751px" width="10" height="13" viewBox="0 0 10 13"><path d="M9 1 L2 6.5 L9 12 Z" fill="#7dbde9"/></svg>
<div class="a" style="left:201px;top:747px;width:1px;height:22px;background:#ddd"></div>
<div class="a" style="left:209px;top:750px;font-size:12px;line-height:16px">第</div>
<div class="a" style="left:224px;top:744px;width:26px;height:27px;border:1px solid #ddd;border-radius:3px;font-size:14px;line-height:22px;padding-left:4px">1</div>
<div class="a" style="left:253px;top:750px;font-size:12px;line-height:16px">共<span class="v12">1</span>页</div>
<div class="a" style="left:292px;top:747px;width:1px;height:22px;background:#ddd"></div>
<svg class="a" style="left:303px;top:751px" width="10" height="13" viewBox="0 0 10 13"><path d="M1 1 L8 6.5 L1 12 Z" fill="#7dbde9"/></svg>
<svg class="a" style="left:328px;top:751px" width="12" height="13" viewBox="0 0 12 13"><path d="M1 1 L8 6.5 L1 12 Z" fill="#7dbde9"/><rect x="9" y="1" width="2" height="11" fill="#7dbde9"/></svg>
<div class="a" style="left:348px;top:747px;width:1px;height:22px;background:#ddd"></div>
<svg class="a" style="left:357px;top:751px" width="13" height="13" viewBox="0 0 13 13"><path d="M9.5 3.2 A4.5 4.5 0 1 0 11 6.5" fill="none" stroke="#3a8fd0" stroke-width="2"/><path d="M7.5 0.5 L11.5 2.5 L8.5 5.5 Z" fill="#3a8fd0"/></svg>
<div class="a" style="left:604px;top:750px;font-size:12px;line-height:16px">显示<span class="v12s">1</span>到<span class="v12s">10,</span>共<span class="v12s">10</span>记录</div>

</body>
</html>
